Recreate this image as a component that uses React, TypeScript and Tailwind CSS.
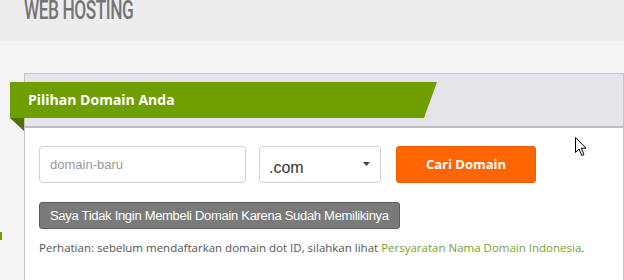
export default function App() {
  return (
    <div className="relative w-[624px] h-[280px] overflow-hidden bg-[#f4f4f4]">
      {/* Page title bar */}
      <div className="h-[41px] bg-[#ededed] pl-6">
        <div className="inline-block whitespace-nowrap origin-left scale-x-[0.69] -mt-[4px] font-['Roboto',sans-serif] text-[25px] leading-[30px] font-medium text-[#757575] tracking-tight">
          WEB HOSTING
        </div>
      </div>

      {/* Domain card */}
      <div className="pt-8 pl-6">
        <div className="border-t border-l border-r border-[#c4c5ca]">
          <div className="bg-[#e4e4e9] pt-2 pb-2 border-b-2 border-[#bcbec3]">
            <div className="relative -ml-[15px] w-[427px]">
              <div className="h-9 bg-[#6f9e00] pl-[18px] [clip-path:polygon(0_0,100%_0,calc(100%-13px)_100%,0_100%)] font-['Open_Sans',sans-serif] font-bold text-[14px] leading-9 text-white">
                Pilihan Domain Anda
              </div>
              <svg className="absolute left-0 top-9" width="14" height="13" viewBox="0 0 14 13">
                <polygon points="0,0 14,0 14,13" fill="#4d7300" />
              </svg>
            </div>
          </div>

          <div className="bg-white pt-[18px] pl-[14px] pb-10">
            <div className="flex items-start">
              <div className="w-[207px] h-[37px] border border-[#cfcfcf] rounded-[4px] pl-[10px] flex items-center font-['Liberation_Sans',sans-serif] text-[13px] text-[#9a9a9a]">
                domain-baru
              </div>
              <div className="ml-[13px] w-[122px] h-[37px] border border-[#cfcfcf] rounded-[4px] pl-[9px] pr-[10px] pt-[10px] flex items-start justify-between font-['Liberation_Sans',sans-serif] text-[16px] leading-5 text-[#333]">
                <span className="mt-[1px]">.com</span>
                <svg className="mt-[5px]" width="7" height="4" viewBox="0 0 7 4">
                  <polygon points="0,0 7,0 3.5,4" fill="#444" />
                </svg>
              </div>
              <div className="ml-[15px] w-[140px] h-[37px] bg-[#ff6600] border border-[#ec5f00] rounded-[3px] flex items-center justify-center font-['Open_Sans',sans-serif] font-bold text-[13px] text-white">
                Cari Domain
              </div>
            </div>

            <div className="mt-[19px] w-[361px] h-[27px] bg-[#7a7a7a] border border-[#5d5d5d] rounded-[3px] pl-[10px] flex items-center whitespace-nowrap font-['Liberation_Sans',sans-serif] text-[13px] tracking-[-0.3px] text-white">
              Saya Tidak Ingin Membeli Domain Karena Sudah Memilikinya
            </div>

            <p className="mt-[11px] whitespace-nowrap font-['Open_Sans',sans-serif] text-[11.5px] leading-4 text-[#555]">
              Perhatian: sebelum mendaftarkan domain dot ID, silahkan lihat{" "}
              <span className="text-[#76a22a]">Persyaratan Nama Domain Indonesia</span>.
            </p>
          </div>
        </div>
      </div>

      {/* stray green edge at the far left */}
      <div className="absolute left-0 top-[232px] w-[2px] h-[8px] bg-[#6f9e00]" />

      {/* mouse pointer */}
      <svg className="absolute left-[575px] top-[137px]" width="13" height="20" viewBox="0 0 13 20">
        <path d="M0.5 0.5 L0.5 15.5 L4 12 L6.8 18.5 L9 17.5 L6.3 11.2 L11 11.2 Z" fill="#fff" stroke="#000" strokeWidth="1" strokeLinejoin="miter" />
      </svg>
    </div>
  );
}
